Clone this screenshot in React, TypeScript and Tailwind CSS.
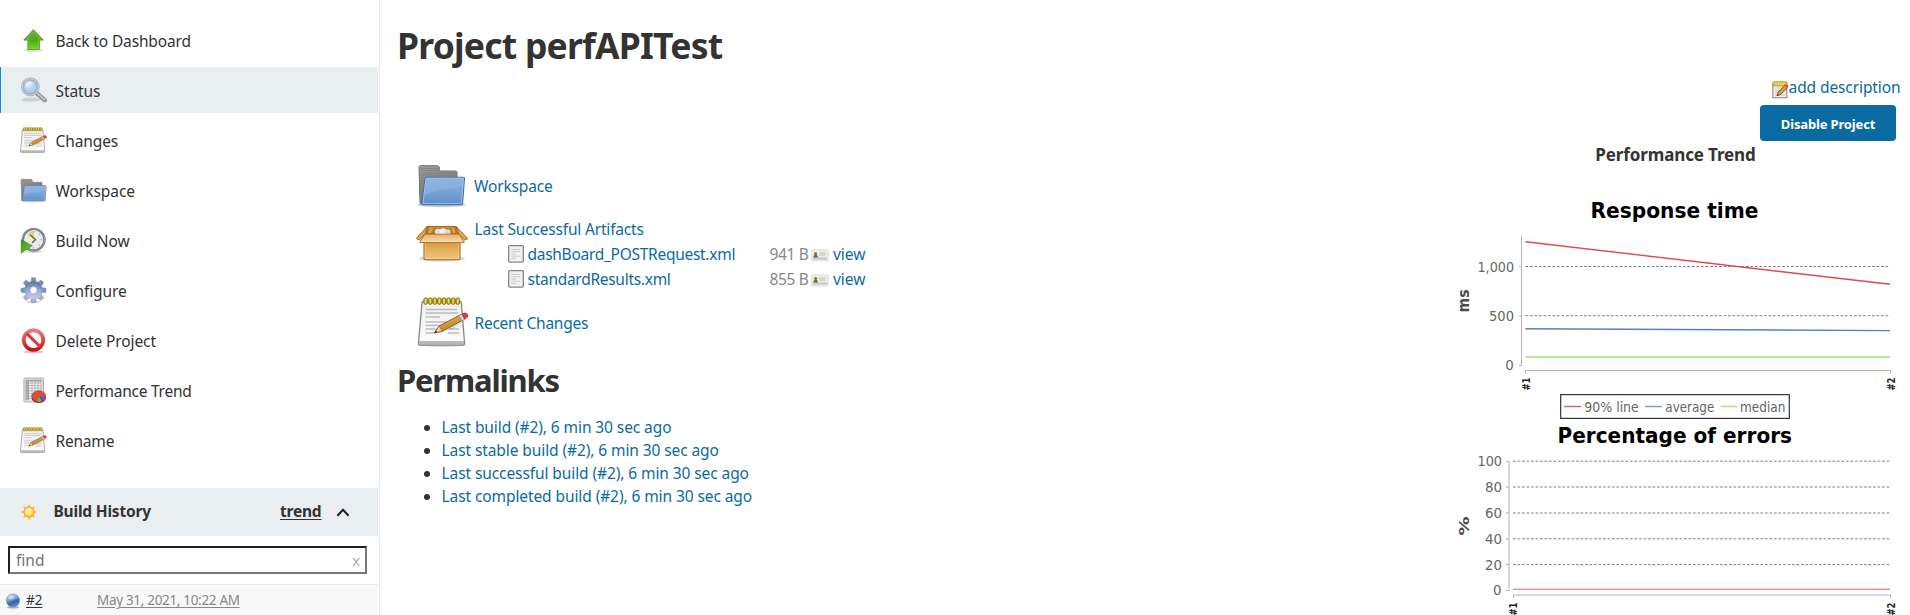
import React from "react";

type IconProps = { className?: string };

const BackIcon = ({ className }: IconProps) => (
  <svg className={className} viewBox="0 0 26 26">
    <defs>
      <linearGradient id="up" x1="0" y1="0" x2="0" y2="1">
        <stop offset="0" stopColor="#6fae3a" />
        <stop offset="0.55" stopColor="#55a51c" />
        <stop offset="1" stopColor="#74d816" />
      </linearGradient>
    </defs>
    <ellipse cx="13" cy="22.4" rx="9" ry="1.6" fill="#000" opacity="0.13" />
    <path d="M13 2.6 22.4 12.6H18.6V21.6H7.6V12.6H3.6Z" fill="url(#up)" stroke="#4b9a1b" strokeWidth="0.9" strokeLinejoin="round" />
    <path d="M13 4.4 20 11.7H17.6V20.5H8.7V11.7H6Z" fill="none" stroke="#a5dd74" strokeWidth="0.6" opacity="0.7" />
  </svg>
);

const SearchIcon = ({ className }: IconProps) => (
  <svg className={className} viewBox="0 0 26 26">
    <defs>
      <radialGradient id="lens" cx="0.4" cy="0.35" r="0.7">
        <stop offset="0" stopColor="#e3effb" />
        <stop offset="0.5" stopColor="#b4d0f0" />
        <stop offset="1" stopColor="#9dc0ea" />
      </radialGradient>
    </defs>
    <ellipse cx="11" cy="21.8" rx="9.5" ry="2" fill="#000" opacity="0.12" />
    <path d="M15.5 15 23.8 22.2" stroke="#8d8f8c" strokeWidth="4.2" strokeLinecap="round" />
    <path d="M16.5 15.6 23.6 21.8" stroke="#c9cac8" strokeWidth="1.8" strokeLinecap="round" />
    <circle cx="10" cy="9.6" r="8" fill="url(#lens)" stroke="#a4a6a4" strokeWidth="2" />
    <circle cx="10" cy="9.6" r="7.9" fill="none" stroke="#dcdedc" strokeWidth="0.9" />
    <circle cx="10" cy="9.6" r="6.5" fill="none" stroke="#7ba2d4" strokeWidth="0.7" />
    <path d="M5 9.5C5 6 8 4.2 11.6 4.6 12.5 7 9 7.5 5 9.5Z" fill="#fff" opacity="0.5" />
  </svg>
);

const NotepadIcon = ({ className }: IconProps) => (
  <svg className={className} viewBox="2.5 4 51.5 51">
    <defs>
      <linearGradient id="paper" x1="0" y1="0" x2="0" y2="1">
        <stop offset="0" stopColor="#efefef" />
        <stop offset="1" stopColor="#fcfcfc" />
      </linearGradient>
      <linearGradient id="pencil" x1="0" y1="0" x2="0.5" y2="1">
        <stop offset="0" stopColor="#eabf6c" />
        <stop offset="1" stopColor="#b87b1f" />
      </linearGradient>
    </defs>
    <ellipse cx="26.5" cy="51.8" rx="24" ry="2.2" fill="#000" opacity="0.14" />
    <path d="M7 9.5Q7 8.5 8.2 8.5H45Q46.2 8.5 46.3 9.5L49.6 50Q49.6 52 48 52H5Q3.4 52 3.5 50Z" fill="url(#paper)" stroke="#85878a" strokeWidth="1.3" />
    <path d="M4.2 48H49L49.2 50Q49.2 51.4 48 51.4H5Q3.9 51.4 4 50Z" fill="#b7b9b7" />
    <path d="M10.5 16.5H42.5M10.5 20H43.5M10.5 24H25M10.5 29H36M10.5 32.5H33M10.5 36H30M10.5 40H20M34 36H44M33 40H44" stroke="#bcbdbb" strokeWidth="1.3" />
    <path d="M8.7 5.4H44.8V10.5H8.7Z" fill="#a78d20" opacity="0.65" />
    {[10.6, 15.2, 19.8, 24.4, 29, 33.6, 38.2, 42.8].map((x) => (
      <g key={x}>
        <rect x={x - 1.7} y="4.8" width="3.4" height="6.6" rx="1.6" fill="#d4bd32" stroke="#7d6a14" strokeWidth="0.8" />
        <rect x={x - 0.4} y="6" width="0.9" height="4" fill="#f4e68a" />
      </g>
    ))}
    <path d="M20 41 25 39 38 36 51 27Z" fill="#000" opacity="0.12" />
    <path d="M19.5 39.8 24.3 32.9 45.8 21.6 48.3 26.9 27.2 38.3Z" fill="url(#pencil)" stroke="#855717" strokeWidth="0.9" strokeLinejoin="round" />
    <path d="M19.5 39.8 24.3 32.9 27.2 38.3Z" fill="#ecd0a0" stroke="#855717" strokeWidth="0.6" />
    <path d="M19.2 40 21 37.4 22.1 39.3Z" fill="#222" />
    <path d="M44 22.6 47.2 21 49.8 26.2 46.7 27.8Z" fill="#cdd0d2" stroke="#8d8f91" strokeWidth="0.6" />
    <path d="M47 21 50 20Q53.2 20.5 53 23.6L49.7 26.2Z" fill="#e33b3b" stroke="#b92626" strokeWidth="0.8" />
  </svg>
);

const FolderIcon = ({ className }: IconProps) => (
  <svg className={className} viewBox="2 3 49 44">
    <defs>
      <linearGradient id="folder" x1="0" y1="0" x2="0" y2="1">
        <stop offset="0" stopColor="#85aeda" />
        <stop offset="0.5" stopColor="#7aa4d6" />
        <stop offset="1" stopColor="#5c90cf" />
      </linearGradient>
      <linearGradient id="folderBack" x1="0" y1="0" x2="0.4" y2="1">
        <stop offset="0" stopColor="#a0a09f" />
        <stop offset="1" stopColor="#6c6d6b" />
      </linearGradient>
    </defs>
    <ellipse cx="26.5" cy="43.7" rx="24" ry="2.5" fill="#000" opacity="0.2" />
    <path d="M4 6Q4 4.7 5.3 4.7H22.5L24.3 6V10H41Q42 10.2 42 11.5V43H6.5Q5 43 5 41.5Z" fill="url(#folderBack)" stroke="#737572" strokeWidth="1" />
    <path d="M5 7.5H23M5 9.5H23M5 12H41M5 14H41M5 17H9M5 20H9M5 23H9M5 26H9" stroke="#7d7f7c" strokeWidth="0.7" />
    <path d="M10 17.2Q10 16.2 11 16.2H48.4Q49.6 16.2 49.5 17.4L47.6 42.3Q47.4 43.6 46.2 43.6H8Q6.9 43.6 7 42.4Z" fill="url(#folder)" stroke="#3f70b0" strokeWidth="1.1" />
    <path d="M10.9 17.2H48.5L46.5 42.6H8Z" fill="none" stroke="#b9d1ee" strokeWidth="0.8" opacity="0.8" />
    <path d="M11.5 18H48L47.4 25C36 30 22 26 10 34.5Z" fill="#fff" opacity="0.1" />
  </svg>
);

const BuildIcon = ({ className }: IconProps) => (
  <svg className={className} viewBox="0 0 27 28">
    <defs>
      <linearGradient id="play" x1="0" y1="0" x2="1" y2="1">
        <stop offset="0" stopColor="#3b8a10" />
        <stop offset="1" stopColor="#7fd63b" />
      </linearGradient>
    </defs>
    <ellipse cx="14" cy="25.6" rx="9" ry="1.3" fill="#000" opacity="0.15" />
    <circle cx="13.7" cy="13.2" r="11.2" fill="#ecece6" stroke="#76778f" strokeWidth="2.4" />
    <circle cx="13.7" cy="13.2" r="11.6" fill="none" stroke="#a9aabd" strokeWidth="0.7" />
    <path d="M13.7 13.2 7 7.5 10.2 4.6 14.6 4.2Z" fill="#ecd46c" />
    <path d="M13.7 4.3V6M20.3 6.8 19 8M22.6 13.2H20.8M20.2 19.6 19 18.5M13.7 22.4V20.6" stroke="#9b9b98" strokeWidth="1" />
    <path d="M10 8.2 15.6 13 12 16.5" fill="none" stroke="#6c6e69" strokeWidth="1.6" />
    <path d="M0.8 13.2 12.2 19.4 0.8 27.2Z" fill="url(#play)" stroke="#3e8615" strokeWidth="0.7" />
  </svg>
);

const GearIcon = ({ className }: IconProps) => (
  <svg className={className} viewBox="0 0 28 28">
    <defs>
      <linearGradient id="gear" x1="0" y1="0" x2="0" y2="1">
        <stop offset="0" stopColor="#5f7da8" />
        <stop offset="0.5" stopColor="#8fa3ca" />
        <stop offset="1" stopColor="#c0c3e4" />
      </linearGradient>
    </defs>
    <ellipse cx="14" cy="25.8" rx="8" ry="1.4" fill="#000" opacity="0.15" />
    {[0, 45, 90, 135, 180, 225, 270, 315].map((a) => (
      <path key={a} d="M11.2 6.5 12 0.8H16L16.8 6.5Z" fill={a > 90 && a < 270 ? "#aab0d6" : "#7890bb"} stroke="#6d7fae" strokeWidth="0.5" transform={`rotate(${a} 14 13.7)`} />
    ))}
    <circle cx="14" cy="13.7" r="6.7" fill="none" stroke="url(#gear)" strokeWidth="5.6" />
    <circle cx="14" cy="13.7" r="3.7" fill="#fff" stroke="#a3aed0" strokeWidth="0.9" />
    <circle cx="14" cy="13.7" r="6.3" fill="none" stroke="#d6daef" strokeWidth="0.6" opacity="0.5" />
  </svg>
);

const DeleteIcon = ({ className }: IconProps) => (
  <svg className={className} viewBox="0 0 26 26">
    <defs>
      <linearGradient id="stop" x1="0" y1="0" x2="0" y2="1">
        <stop offset="0" stopColor="#ec7f7f" />
        <stop offset="0.5" stopColor="#df4545" />
        <stop offset="1" stopColor="#d40a0a" />
      </linearGradient>
    </defs>
    <ellipse cx="13" cy="24" rx="9.5" ry="1.5" fill="#000" opacity="0.2" />
    <circle cx="13" cy="12.6" r="9.3" fill="#fff" stroke="url(#stop)" strokeWidth="3.4" />
    <path d="M6.6 6.4 19.4 18.8" stroke="#dc3a3a" strokeWidth="3" />
    <circle cx="13" cy="12.6" r="11.1" fill="none" stroke="#c22" strokeWidth="0.5" opacity="0.6" />
  </svg>
);

const ReportIcon = ({ className }: IconProps) => (
  <svg className={className} viewBox="0 0 26 27">
    <rect x="3.4" y="1" width="19.6" height="24" rx="0.8" fill="#dededd" stroke="#b1b2b0" strokeWidth="1" />
    <rect x="5.4" y="2.8" width="15.8" height="20.4" fill="#f4f4f2" />
    <path d="M5.5 2.8V23M8 2.8V23M11.5 2.8V23M14.5 2.8V23M17.5 2.8V23M20.5 2.8V23M5.4 3.2H21M5.4 6H21M5.4 8.6H21M5.4 11.2H21M5.4 13.8H21M5.4 16.4H21M5.4 19H21M5.4 21.6H21" stroke="#a2a4a1" strokeWidth="0.7" />
    <path d="M5.6 3H8.4V23H5.6ZM5.6 3H21V4.8H5.6Z" fill="#82847f" opacity="0.5" />
    <ellipse cx="18.3" cy="21" rx="7" ry="5" fill="#8c1515" />
    <ellipse cx="18.3" cy="19.4" rx="7" ry="5.6" fill="#dc4a4a" stroke="#b22626" strokeWidth="0.6" />
    <path d="M18.3 19.2 25 20.6Q24.5 23.4 21 24.6Z" fill="#3f6cae" />
    <path d="M18.3 19.2 21 24.6Q18.6 25.2 16.8 24.8Z" fill="#78b944" />
  </svg>
);

const PackageIcon = ({ className }: IconProps) => (
  <svg className={className} viewBox="0 3 54 40">
    <defs>
      <linearGradient id="box" x1="0" y1="0" x2="0" y2="1">
        <stop offset="0" stopColor="#cf8f35" />
        <stop offset="0.3" stopColor="#dfa652" />
        <stop offset="1" stopColor="#efc680" />
      </linearGradient>
      <linearGradient id="flap" x1="0" y1="0" x2="0" y2="1">
        <stop offset="0" stopColor="#e4b067" />
        <stop offset="1" stopColor="#fae0b4" />
      </linearGradient>
    </defs>
    <ellipse cx="27" cy="37.6" rx="23" ry="3" fill="#000" opacity="0.17" />
    <path d="M9 19H45V37Q45 38.8 43.4 38.8H10.6Q9 38.8 9 37Z" fill="url(#box)" stroke="#a0691b" strokeWidth="1.1" />
    <path d="M10.2 21H43.8V37.6H10.2Z" fill="none" stroke="#f5d9a6" strokeWidth="0.7" opacity="0.8" />
    <path d="M12 5.4H41L45.5 12.6H8.5Z" fill="#b8791f" stroke="#a0691b" strokeWidth="1" />
    <path d="M14 6.6H39L40.5 12H13Z" fill="#d8a24c" />
    <path d="M18 7H36.5L38 12.5H16Z" fill="#8c5a18" opacity="0.5" />
    <circle cx="23" cy="11" r="3.2" fill="#e5e2dc" />
    <circle cx="28" cy="10.6" r="3.4" fill="#f3f1ed" />
    <circle cx="32.6" cy="11.2" r="2.9" fill="#dedad3" />
    <path d="M12 5.4 1.3 17.6 4.4 19 10.5 12.6Z" fill="#dca451" stroke="#a0691b" strokeWidth="0.9" />
    <path d="M41.2 5.4 52.8 17.8 49.6 19.2 43.5 12.6Z" fill="#dca451" stroke="#a0691b" strokeWidth="0.9" />
    <path d="M9.6 13.2H44.2L49.4 21.6H4.6Z" fill="url(#flap)" stroke="#b0762a" strokeWidth="1" />
  </svg>
);

const FileIcon = () => (
  <svg className="h-[18px] w-4" viewBox="0 0 16 18">
    <rect x="0.7" y="0.7" width="14.6" height="16.4" rx="0.8" fill="#f1f1f1" stroke="#868885" strokeWidth="1.3" />
    <path d="M3.3 4.5H12M3.3 6.7H12M3.3 9H8M3.3 11.2H12.2M3.3 13.3H8" stroke="#c6c7c5" strokeWidth="0.9" />
  </svg>
);

const CardIcon = () => (
  <svg className="h-[14px] w-[18px]" viewBox="0 0 18 14">
    <rect x="0.4" y="10.6" width="17.2" height="2" fill="#000" opacity="0.08" />
    <rect x="0.5" y="0.8" width="17" height="10.6" rx="1.4" fill="#ececea" stroke="#dcdcda" strokeWidth="0.7" />
    <rect x="2" y="8.6" width="14" height="1.8" fill="#c3c5c3" />
    <circle cx="4.6" cy="4.5" r="1.5" fill="#9d6a32" />
    <path d="M2.3 8.6Q2.4 5.8 4.6 5.7 6.9 5.8 7 8.6Z" fill="#5c7426" />
    <path d="M8.5 4H14.5M8.5 6H14" stroke="#b8bab8" strokeWidth="0.9" />
  </svg>
);

const MiniNoteIcon = () => (
  <svg className="h-[18px] w-[17px]" viewBox="0 0 17 18">
    <path d="M1 2.5H14.5L15 16.8H0.7Z" fill="#f0f0ee" stroke="#858783" strokeWidth="1.1" />
    <path d="M3 7H10M3 9.3H8M3 11.6H6M3 14H13" stroke="#bcbdbb" strokeWidth="0.8" />
    <rect x="1" y="0.8" width="14" height="4" rx="1" fill="#e5c13a" stroke="#b18e1d" strokeWidth="0.8" />
    <path d="M4 1.6V4M6.5 1.6V4M9 1.6V4M11.5 1.6V4" stroke="#f8e99a" strokeWidth="0.8" />
    <path d="M5 14.8 6.3 11 12.8 4.2 15.6 6.6 9 13.3Z" fill="#d29b3e" stroke="#7b511a" strokeWidth="0.9" />
    <path d="M12.8 4.2 14 3Q16.3 3.4 16.6 5.5L15.6 6.6Z" fill="#db5757" />
    <path d="M5 14.8 5.5 13.2 6.5 14.2Z" fill="#222" />
  </svg>
);

const SunIcon = () => (
  <svg className="h-4 w-4" viewBox="0 0 16 16">
    <defs>
      <radialGradient id="sun" cx="0.45" cy="0.4" r="0.6">
        <stop offset="0" stopColor="#fffbd0" />
        <stop offset="0.6" stopColor="#fde56a" />
        <stop offset="1" stopColor="#f6c53e" />
      </radialGradient>
    </defs>
    {[0, 45, 90, 135, 180, 225, 270, 315].map((a) => (
      <path key={a} d="M5.8 3.8 8 0 10.2 3.8Z" fill="#f7b64a" transform={`rotate(${a} 8 8)`} />
    ))}
    <circle cx="8" cy="8" r="4.8" fill="url(#sun)" stroke="#f3a63a" strokeWidth="0.9" />
  </svg>
);

const BallIcon = () => (
  <svg className="mt-[2px] h-4 w-4" viewBox="0 0 16 16">
    <defs>
      <linearGradient id="ball" x1="0.2" y1="0" x2="0.6" y2="1">
        <stop offset="0" stopColor="#cfdff2" />
        <stop offset="0.4" stopColor="#7fa5d4" />
        <stop offset="0.65" stopColor="#3465a4" />
        <stop offset="1" stopColor="#5d93d6" />
      </linearGradient>
    </defs>
    <ellipse cx="8" cy="14.4" rx="6" ry="1.2" fill="#000" opacity="0.3" />
    <circle cx="8" cy="7.5" r="6.6" fill="url(#ball)" stroke="#6d8fbd" strokeWidth="0.7" />
    <ellipse cx="6.4" cy="4.6" rx="3" ry="2" fill="#fff" opacity="0.4" />
  </svg>
);

const tasks = [
  { label: "Back to Dashboard", Icon: BackIcon, track: "tracking-[-0.14px]" },
  { label: "Status", Icon: SearchIcon, track: "tracking-[-0.1px]", active: true },
  { label: "Changes", Icon: NotepadIcon, track: "tracking-[-0.1px]" },
  { label: "Workspace", Icon: FolderIcon, track: "tracking-[-0.06px]" },
  { label: "Build Now", Icon: BuildIcon, track: "tracking-[0px]" },
  { label: "Configure", Icon: GearIcon, track: "tracking-[-0.1px]" },
  { label: "Delete Project", Icon: DeleteIcon, track: "tracking-[-0.1px]" },
  { label: "Performance Trend", Icon: ReportIcon, track: "tracking-[-0.26px]" },
  { label: "Rename", Icon: NotepadIcon, track: "tracking-[-0.2px]" },
];

const artifacts = [
  { name: "dashBoard_POSTRequest.xml", size: "941 B" },
  { name: "standardResults.xml", size: "855 B" },
];

const permalinks = [
  "Last build (#2), 6 min 30 sec ago",
  "Last stable build (#2), 6 min 30 sec ago",
  "Last successful build (#2), 6 min 30 sec ago",
  "Last completed build (#2), 6 min 30 sec ago",
];

function Sidebar() {
  return (
    <aside className="flex w-[380px] shrink-0 flex-col border-r border-[#eaeaea] pt-[17px]">
      <nav className="flex flex-col gap-1 pr-px">
        {tasks.map(({ label, Icon, track, active }) => (
          <a
            key={label}
            className={
              active
                ? "flex h-[46px] items-center border-l border-[#0b8fd6] bg-[#e9eef1] pl-[19px]"
                : "flex h-[46px] items-center pl-5"
            }
          >
            <Icon className="h-[27px] w-[27px]" />
            <span className={`pt-px pl-[8.5px] leading-5 ${track}`}>{label}</span>
          </a>
        ))}
      </nav>
      <div className="mt-[25px] mr-px flex h-12 items-center bg-[#e9eef1] pl-[21px] font-bold tracking-[-0.2px]">
        <SunIcon />
        <span className="mb-[2px] ml-[16.5px] w-[226.5px] leading-5">Build History</span>
        <span className="mb-[2px] w-10 leading-5 underline underline-offset-2">trend</span>
        <svg className="mt-px ml-4 h-4 w-[14px]" viewBox="0 0 15 16" fill="none" stroke="#222" strokeWidth="2.2">
          <path d="M1.5 11 7.5 4.5 13.5 11" />
        </svg>
      </div>
      <div className="mt-[10px] ml-2 flex h-7 w-[359px] items-center justify-between border-2 border-t-[#1f1f1f] border-r-[#767676] border-b-[#767676] border-l-[#1f1f1f] pr-[5px] pl-[6px]">
        <span className="leading-5 text-[#757575]">find</span>
        <span className="pb-px font-['Open_Sans'] text-[15px] leading-5 text-[#a8a8a8]">x</span>
      </div>
      <div className="mt-[10px] mr-px flex h-[31px] items-center border-t border-[#e6eaed] bg-[#f8f8f8] pl-[5px] text-[13.5px]">
        <BallIcon />
        <span className="w-[76px] pl-[5px] leading-5 underline underline-offset-2">#2</span>
        <span className="text-[13.5px] leading-5 tracking-[-0.32px] text-[#888] underline underline-offset-2">May 31, 2021, 10:22 AM</span>
      </div>
    </aside>
  );
}

function Trends() {
  return (
    <svg
      className="block h-[430px] w-[490px]"
      viewBox="1420 185 490 430"
      fontFamily="'DejaVu Sans',sans-serif"
      fontSize="13.3"
      fill="#666"
    >
      <g fontSize="21.5" fontWeight="700" fill="#000">
        <text x="1590.5" y="218" textLength="168" lengthAdjust="spacingAndGlyphs">Response time</text>
        <text x="1557.5" y="443" textLength="234.5" lengthAdjust="spacingAndGlyphs">Percentage of errors</text>
      </g>
      <g stroke="#b4b4b4" strokeWidth="1" fill="none">
        <path d="M1521.5 236V365.5M1519 266.5H1522M1519 316H1522M1519 365.5H1522M1525.5 373V370.5H1890.5V373" />
        <path d="M1509 461V590.5M1506 461.3H1509M1506 487H1509M1506 513H1509M1506 538.8H1509M1506 564.5H1509M1506 590.5H1509M1513.5 598V595H1890.5V598" />
      </g>
      <g stroke="#7f7f7f" strokeWidth="1" strokeDasharray="2.7 1.8">
        <path d="M1525.5 266.5H1890M1525.5 315.7H1890" />
        <path d="M1513 461.2H1890M1513 487H1890M1513 513H1890M1513 538.8H1890M1513 564.6H1890" />
      </g>
      <g strokeWidth="1.4">
        <path d="M1525.5 241.7 1890 284.3" stroke="#df4a4a" />
        <path d="M1525.5 328.7 1890 330.6" stroke="#5583bf" />
        <path d="M1525.5 357H1890" stroke="#a2e46c" />
        <path d="M1513 589.3H1890" stroke="#f58f8f" />
      </g>
      <text x="1477.5" y="272.3" textLength="36.5" lengthAdjust="spacingAndGlyphs">1,000</text>
      <text x="1489" y="320.8" textLength="25" lengthAdjust="spacingAndGlyphs">500</text>
      <text x="1505.3" y="370.3" textLength="8.5" lengthAdjust="spacingAndGlyphs">0</text>
      <text x="1477.5" y="466.2" textLength="24.5" lengthAdjust="spacingAndGlyphs">100</text>
      <text x="1485" y="492" textLength="17" lengthAdjust="spacingAndGlyphs">80</text>
      <text x="1485" y="518" textLength="17" lengthAdjust="spacingAndGlyphs">60</text>
      <text x="1485" y="543.8" textLength="17" lengthAdjust="spacingAndGlyphs">40</text>
      <text x="1485" y="569.7" textLength="17" lengthAdjust="spacingAndGlyphs">20</text>
      <text x="1493" y="595.4" textLength="8.5" lengthAdjust="spacingAndGlyphs">0</text>
      <g fontWeight="700" fill="#4a4a4a">
        <text transform="translate(1469 312.5) rotate(-90)" fontSize="15" textLength="23" lengthAdjust="spacingAndGlyphs">ms</text>
        <text transform="translate(1469 535.5) rotate(-90)" fontSize="14.5" textLength="19" lengthAdjust="spacingAndGlyphs">%</text>
      </g>
      <g fontSize="10.5" fontWeight="700" fill="#222">
        <text transform="translate(1529.5 390.5) rotate(-90)" textLength="13" lengthAdjust="spacingAndGlyphs">#1</text>
        <text transform="translate(1894.5 390.5) rotate(-90)" textLength="13" lengthAdjust="spacingAndGlyphs">#2</text>
        <text transform="translate(1517 615.5) rotate(-90)" textLength="13" lengthAdjust="spacingAndGlyphs">#1</text>
        <text transform="translate(1894.5 615.5) rotate(-90)" textLength="13" lengthAdjust="spacingAndGlyphs">#2</text>
      </g>
      <rect x="1560.7" y="394.6" width="228.6" height="23.8" fill="none" stroke="#333" strokeWidth="1.2" />
      <path d="M1564 406.5H1581" stroke="#e26464" strokeWidth="1.5" />
      <path d="M1645 406.5H1662" stroke="#7b9fce" strokeWidth="1.5" />
      <path d="M1720.5 406.5H1737.5" stroke="#a8e67a" strokeWidth="1.5" />
      <g fontSize="13.6">
        <text x="1584.3" y="412" textLength="54.5" lengthAdjust="spacingAndGlyphs">90% line</text>
        <text x="1665.3" y="412" textLength="49" lengthAdjust="spacingAndGlyphs">average</text>
        <text x="1740" y="412" textLength="45.5" lengthAdjust="spacingAndGlyphs">median</text>
      </g>
    </svg>
  );
}

export default function App() {
  return (
    <div className="flex h-[615px] w-full overflow-hidden bg-white font-['Noto_Sans','Open_Sans',sans-serif] text-[15.5px] text-[#333]">
      <Sidebar />
      <main className="flex min-w-0 flex-1 justify-between">
        <section className="flex flex-col pl-[15px]">
          <h1 className="mt-5 ml-[2px] text-[35.5px] leading-[50px] font-bold tracking-[-0.78px]">Project perfAPITest</h1>
          <div className="mt-[89px] ml-5 flex flex-col text-[#0b6aa2]">
            <div className="flex h-[50px] items-center">
              <FolderIcon className="mt-[3px] h-[44px] w-[49px] translate-x-0.5" />
              <span className="pt-[3px] pl-[10px] leading-5 tracking-[-0.15px]">Workspace</span>
            </div>
            <div className="mt-[9px] flex">
              <PackageIcon className="mt-[6px] h-10 w-[54px] shrink-0" />
              <div className="flex flex-col pl-[5.5px]">
                <span className="h-[23px] leading-[22px] tracking-[-0.18px]">Last Successful Artifacts</span>
                {artifacts.map((a) => (
                  <div key={a.name} className="flex h-[25px] items-center leading-[25px]">
                    <span className="ml-[33px] pt-px">
                      <FileIcon />
                    </span>
                    <span className="w-[246px] pt-px pl-1 tracking-[-0.28px]">{a.name}</span>
                    <span className="w-[41.5px] pt-px tracking-[-0.35px] text-[#888]">{a.size}</span>
                    <span className="pt-[5px]">
                      <CardIcon />
                    </span>
                    <span className="pt-px pl-1">view</span>
                  </div>
                ))}
              </div>
            </div>
            <div className="mt-[5px] flex h-[52px] items-center">
              <NotepadIcon className="h-[51px] w-[51.5px] translate-x-[2.5px]" />
              <span className="pt-[2px] pl-[8px] leading-5 tracking-[-0.25px]">Recent Changes</span>
            </div>
          </div>
          <h2 className="mt-3 ml-[2px] text-[31px] leading-10 font-bold tracking-[-1.2px]">Permalinks</h2>
          <ul className="mt-4 ml-[46.5px] list-disc text-base marker:text-[#333]">
            {permalinks.map((p) => (
              <li key={p} className="h-[23px] text-[15.5px] leading-[23px]">
                <span className="tracking-[-0.09px] text-[#0b6aa2]">{p}</span>
              </li>
            ))}
          </ul>
        </section>
        <section className="flex w-[490px] flex-col">
          <div className="mt-[77px] flex h-5 items-center justify-end pr-[9.5px] text-[#0b6aa2]">
            <span className="pt-[5px]">
              <MiniNoteIcon />
            </span>
            <span className="leading-5 tracking-[-0.1px]">add description</span>
          </div>
          <button className="mt-2 mr-[14px] h-9 w-[136px] self-end rounded bg-[#0b6aa2] pt-[2px] text-[13px] leading-5 font-bold tracking-[-0.15px] text-white">Disable Project</button>
          <h3 className="h-[26px] pt-px pl-[21px] text-center text-[17px] leading-[26px] font-bold tracking-[-0.12px]">Performance Trend</h3>
          <div className="mt-[18px]">
            <Trends />
          </div>
        </section>
      </main>
    </div>
  );
}
